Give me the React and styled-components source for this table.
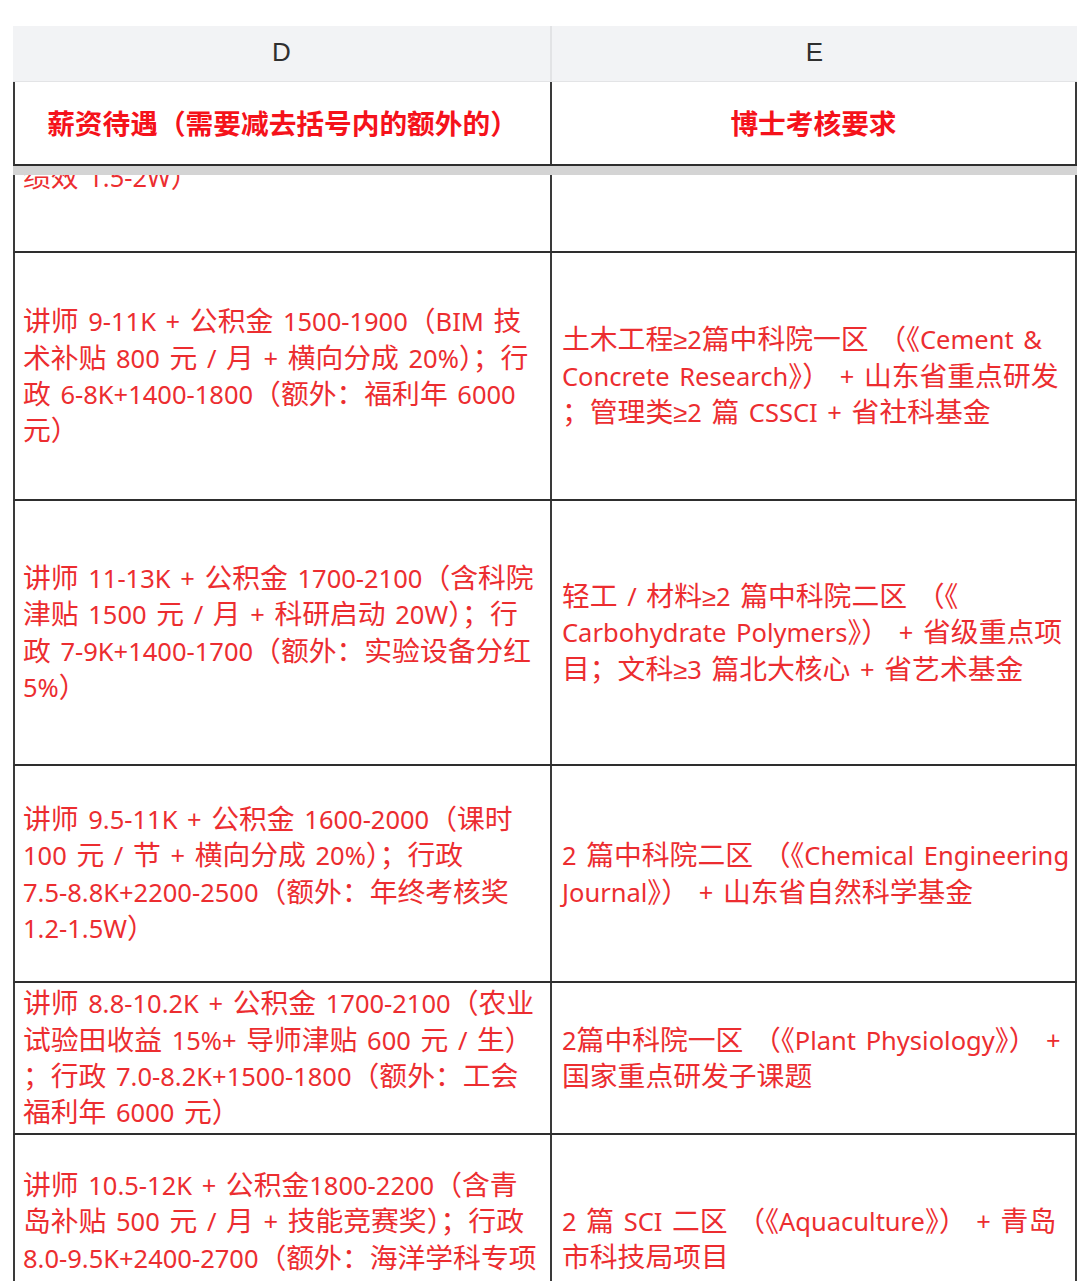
import React from "react";
import styled, { createGlobalStyle } from "styled-components";

const GlobalStyle = createGlobalStyle`
  html, body {
    margin: 0;
    padding: 0;
    background: #ffffff;
    overflow: hidden;
  }
  body {
    font-family: "Noto Sans", "Liberation Sans", "Noto Sans CJK SC", sans-serif;
  }
`;

const Page = styled.div`
  width: 1080px;
  height: 1281px;
  overflow: hidden;
  padding: 26px 0 0 13px;
  box-sizing: border-box;
`;

const Sheet = styled.div`
  width: 1064px;
  display: flex;
  flex-direction: column;
`;

const ColumnHeader = styled.div`
  display: grid;
  grid-template-columns: 539px 525px;
  height: 56px;
  background: #f2f3f5;
  border-bottom: 1px solid #e3e4e6;
  box-sizing: border-box;
`;

const ColumnLetter = styled.div`
  display: flex;
  align-items: center;
  justify-content: center;
  padding-bottom: 2px;
  font-family: "Liberation Sans", Arial, sans-serif;
  font-size: 26px;
  color: #2f2f2f;
  border-right: ${(p) => (p.$last ? "none" : "2px solid #e2e3e5")};
`;

const Row = styled.div`
  display: grid;
  grid-template-columns: 537px 525px;
  height: ${(p) => p.$h}px;
  border-left: 2px solid #3a3a3a;
  border-bottom: 2px solid #2e2e2e;
  box-sizing: border-box;
  background: #ffffff;
`;

const TitleCell = styled.div`
  display: flex;
  align-items: center;
  justify-content: center;
  border-right: 2px solid #3a3a3a;
  font-family: "Noto Sans CJK SC", sans-serif;
  font-weight: 700;
  font-size: 27.7px;
  color: #f5121b;
  padding-bottom: 2px;
`;

const FreezeBar = styled.div`
  height: 9px;
  background: #d4d4d4;
`;

const ScrollViewport = styled.div`
  overflow: hidden;
  flex: 1;
`;

const ScrollContent = styled.div`
  transform: translateY(${(p) => -p.$offset}px);
`;

const Cell = styled.div`
  display: flex;
  flex-direction: column;
  justify-content: ${(p) => (p.$top ? "flex-start" : "center")};
  padding: ${(p) => (p.$top ? `${p.$top}px 0 0` : "0 0 4px")} ${(p) => p.$pad}px;
  border-right: 2px solid #3a3a3a;
  overflow: hidden;
  font-family: "Noto Sans CJK SC", sans-serif;
  font-size: 27.8px;
  color: #ec2d30;
`;

const Line = styled.div`
  white-space: nowrap;
  height: 36.4px;
  line-height: 36.4px;
`;

const Latin = styled.span`
  font-family: "Noto Sans", "Liberation Sans", sans-serif;
  font-size: 25.5px;
  line-height: 1;
  word-spacing: 3px;
`;

const CJK_RUN = /([\u3000-\u303f\u3400-\u9fff\uff00-\uffef]+)/;

function TextLine({ text }) {
  const parts = text.split(CJK_RUN).filter((s) => s.length > 0);
  return (
    <Line>
      {parts.map((s, i) =>
        CJK_RUN.test(s) ? (
          <React.Fragment key={i}>{s}</React.Fragment>
        ) : (
          <Latin key={i}>{s}</Latin>
        )
      )}
    </Line>
  );
}

const rows = [
  { h: 150, d: ["绩效 1.5-2W）"], e: [] },
  {
    h: 248,
    d: [
      "讲师 9-11K + 公积金 1500-1900（BIM 技",
      "术补贴 800 元 / 月 + 横向分成 20%）；行",
      "政 6-8K+1400-1800（额外：福利年 6000",
      "元）",
    ],
    e: [
      "土木工程≥2篇中科院一区 （《Cement &",
      "Concrete Research》） + 山东省重点研发",
      "；管理类≥2 篇 CSSCI + 省社科基金",
    ],
  },
  {
    h: 265,
    d: [
      "讲师 11-13K + 公积金 1700-2100（含科院",
      "津贴 1500 元 / 月 + 科研启动 20W）；行",
      "政 7-9K+1400-1700（额外：实验设备分红",
      "5%）",
    ],
    e: [
      "轻工 / 材料≥2 篇中科院二区 （《",
      "Carbohydrate Polymers》） + 省级重点项",
      "目；文科≥3 篇北大核心 + 省艺术基金",
    ],
  },
  {
    h: 217,
    d: [
      "讲师 9.5-11K + 公积金 1600-2000（课时",
      "100 元 / 节 + 横向分成 20%）；行政",
      "7.5-8.8K+2200-2500（额外：年终考核奖",
      "1.2-1.5W）",
    ],
    e: [
      "2 篇中科院二区 （《Chemical Engineering",
      "Journal》） + 山东省自然科学基金",
    ],
  },
  {
    h: 152,
    d: [
      "讲师 8.8-10.2K + 公积金 1700-2100（农业",
      "试验田收益 15%+ 导师津贴 600 元 / 生）",
      "；行政 7.0-8.2K+1500-1800（额外：工会",
      "福利年 6000 元）",
    ],
    e: ["2篇中科院一区 （《Plant Physiology》） +", "国家重点研发子课题"],
  },
  {
    h: 210,
    dTop: 30,
    d: [
      "讲师 10.5-12K + 公积金1800-2200（含青",
      "岛补贴 500 元 / 月 + 技能竞赛奖）；行政",
      "8.0-9.5K+2400-2700（额外：海洋学科专项",
    ],
    e: ["2 篇 SCI 二区 （《Aquaculture》） + 青岛", "市科技局项目"],
  },
];

export default function App() {
  return (
    <>
      <GlobalStyle />
      <Page>
        <Sheet>
          <ColumnHeader>
            <ColumnLetter>D</ColumnLetter>
            <ColumnLetter $last>E</ColumnLetter>
          </ColumnHeader>
          <Row $h={84}>
            <TitleCell>薪资待遇（需要减去括号内的额外的）</TitleCell>
            <TitleCell>博士考核要求</TitleCell>
          </Row>
          <FreezeBar />
          <ScrollViewport>
            <ScrollContent $offset={72}>
              {rows.map((r, i) => (
                <Row key={i} $h={r.h}>
                  <Cell $pad={8} $top={r.dTop}>
                    {r.d.map((t, j) => (
                      <TextLine key={j} text={t} />
                    ))}
                  </Cell>
                  <Cell $pad={10}>
                    {r.e.map((t, j) => (
                      <TextLine key={j} text={t} />
                    ))}
                  </Cell>
                </Row>
              ))}
            </ScrollContent>
          </ScrollViewport>
        </Sheet>
      </Page>
    </>
  );
}
